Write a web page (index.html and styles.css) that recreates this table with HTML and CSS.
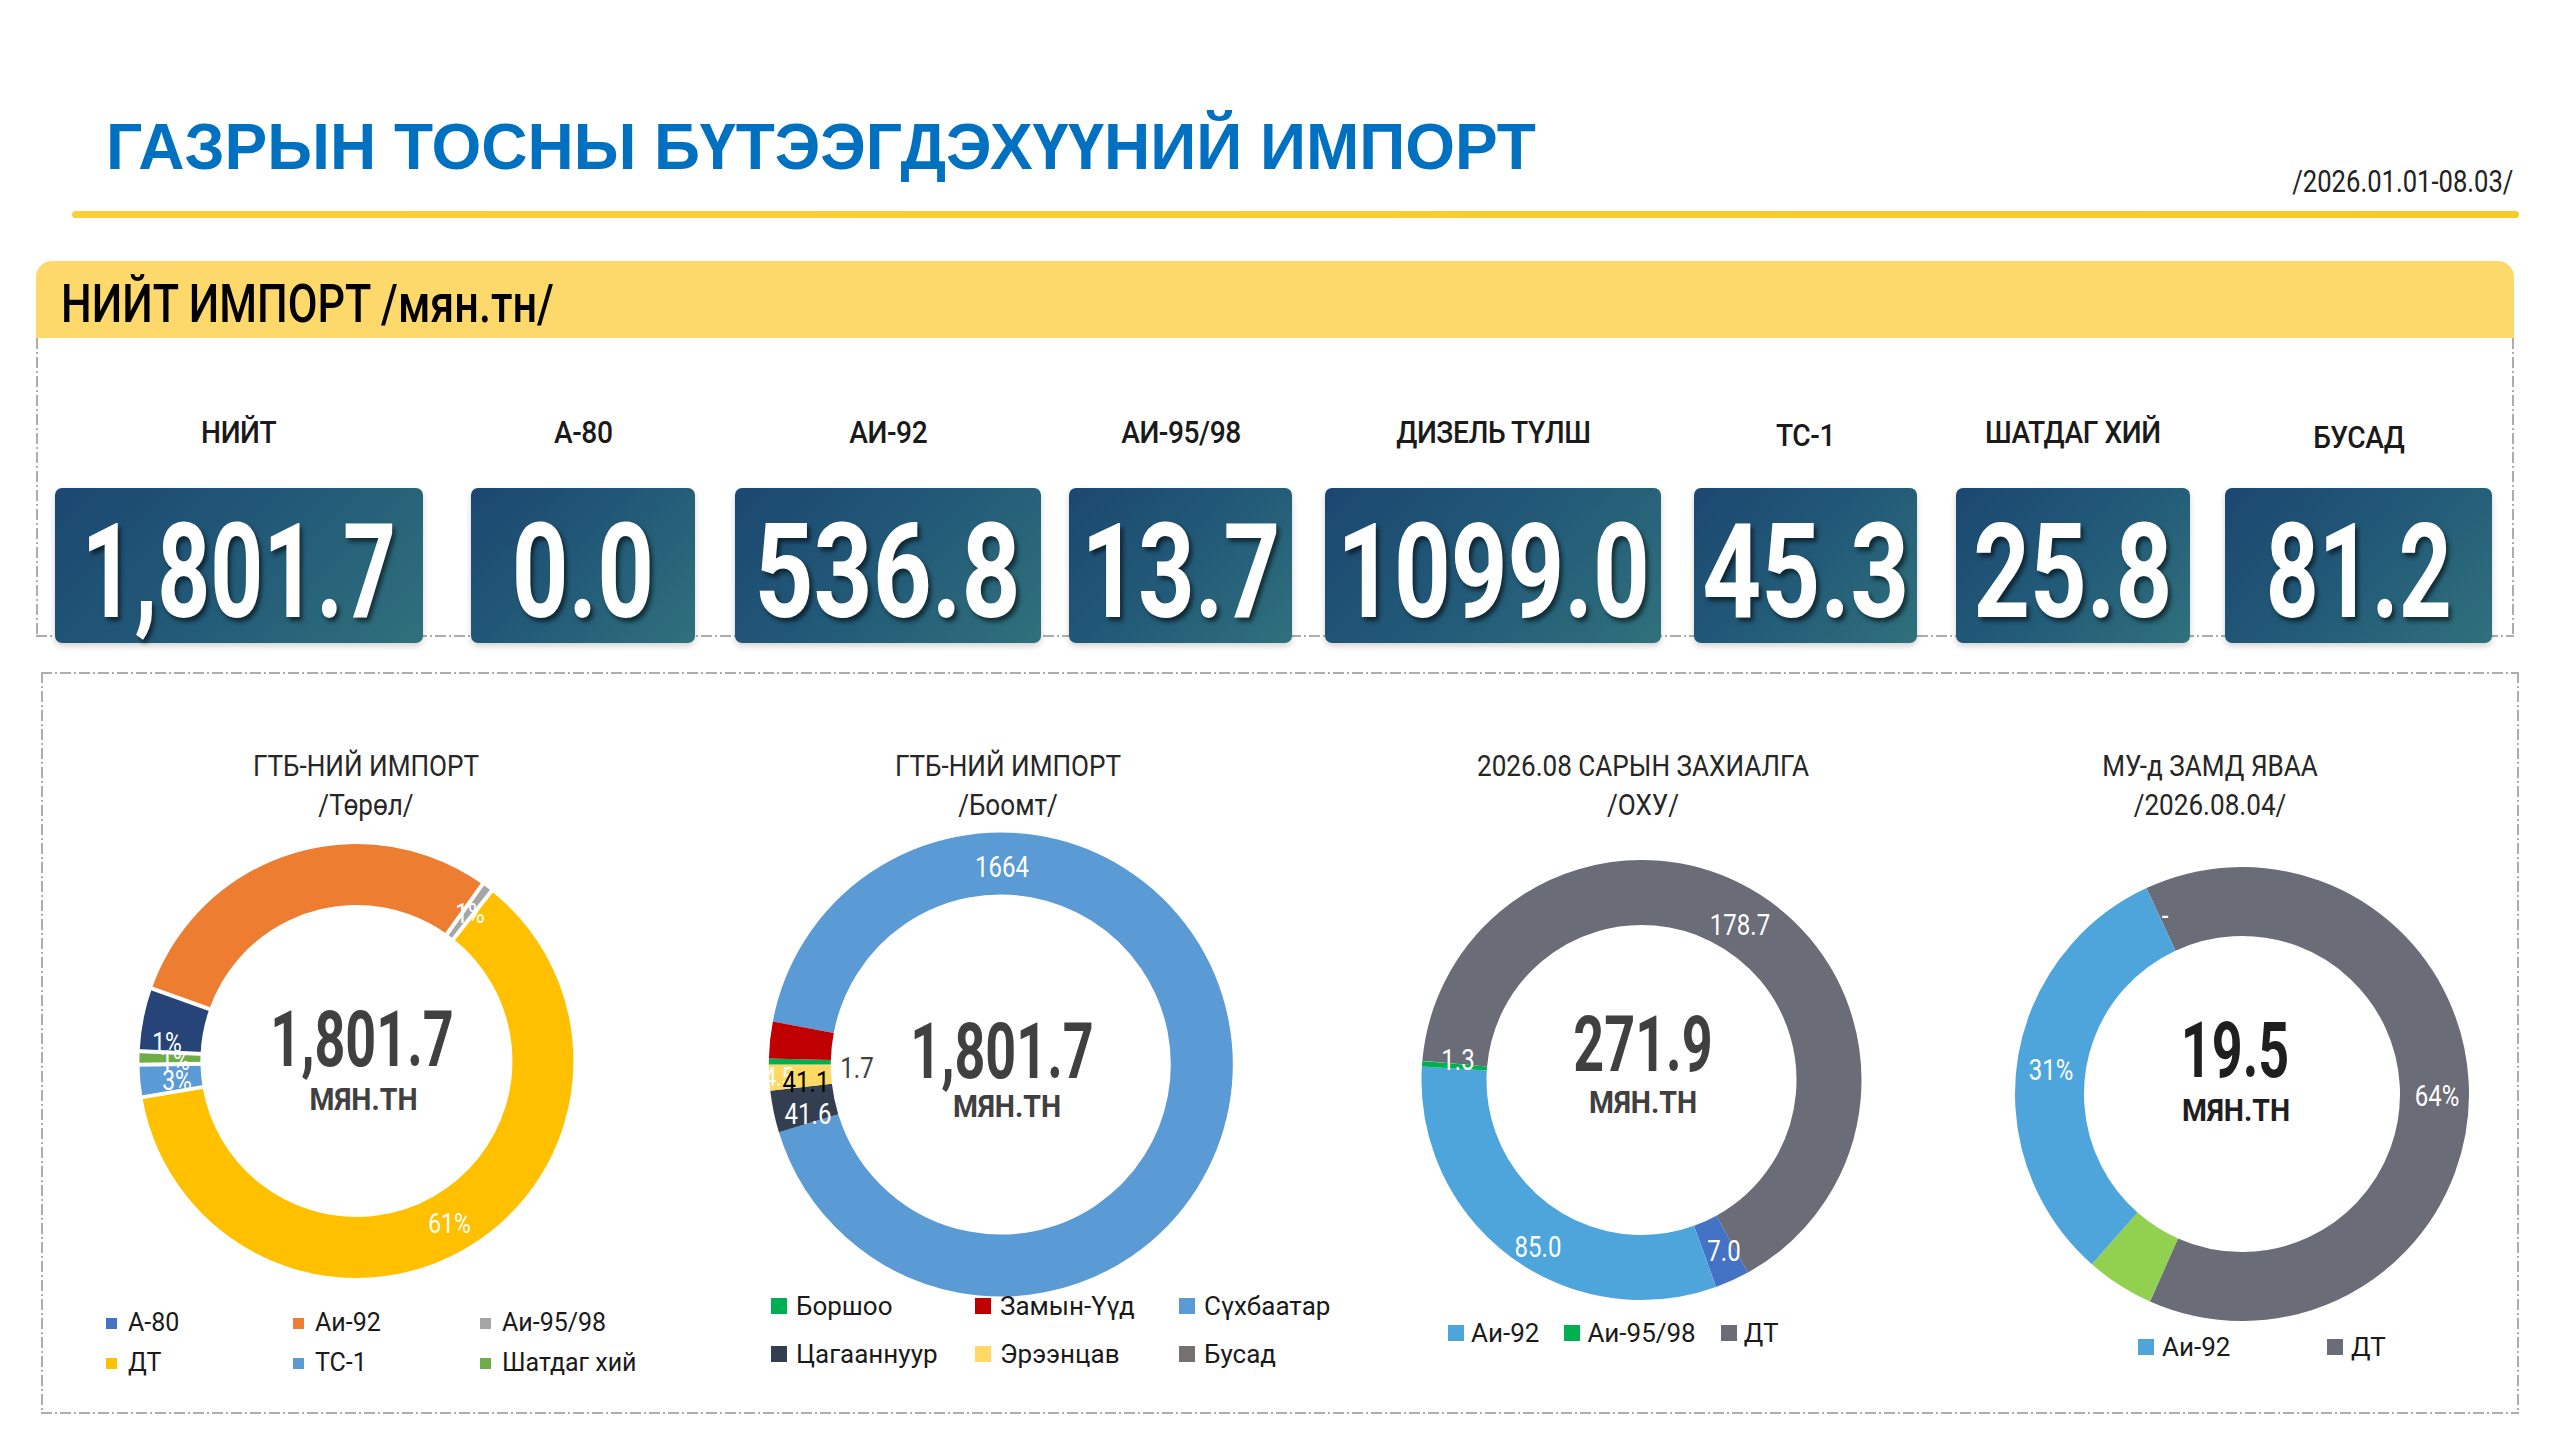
FILE: index.html
```html
<!DOCTYPE html>
<html lang="mn">
<head>
<meta charset="utf-8">
<title>Газрын тосны бүтээгдэхүүний импорт</title>
<link rel="stylesheet" href="styles.css">
</head>
<body>
<div class="page">
  <header class="top">
    <h1 class="title">ГАЗРЫН ТОСНЫ БҮТЭЭГДЭХҮҮНИЙ ИМПОРТ</h1>
    <div class="date"><span>/2026.01.01-08.03/</span></div>
  </header>
  <div class="rule"></div>

  <section class="total">
    <div class="total-head"><span>НИЙТ ИМПОРТ /мян.тн/</span></div>
    <div class="total-body">
      <div class="kpi"><div class="kpi-label"><span>НИЙТ</span></div><div class="kpi-box"><span>1,801.7</span></div></div>
      <div class="kpi"><div class="kpi-label"><span>А-80</span></div><div class="kpi-box"><span>0.0</span></div></div>
      <div class="kpi"><div class="kpi-label"><span>АИ-92</span></div><div class="kpi-box"><span>536.8</span></div></div>
      <div class="kpi"><div class="kpi-label"><span>АИ-95/98</span></div><div class="kpi-box"><span>13.7</span></div></div>
      <div class="kpi"><div class="kpi-label"><span>ДИЗЕЛЬ ТҮЛШ</span></div><div class="kpi-box"><span>1099.0</span></div></div>
      <div class="kpi"><div class="kpi-label"><span>ТС-1</span></div><div class="kpi-box"><span>45.3</span></div></div>
      <div class="kpi"><div class="kpi-label"><span>ШАТДАГ ХИЙ</span></div><div class="kpi-box"><span>25.8</span></div></div>
      <div class="kpi"><div class="kpi-label"><span>БУСАД</span></div><div class="kpi-box"><span>81.2</span></div></div>
    </div>
  </section>

  <section class="charts">
    <!-- Chart 1 -->
    <div class="chart c1">
      <div class="chart-title"><div>ГТБ-НИЙ ИМПОРТ</div><div>/Төрөл/</div></div>
      <svg width="646" height="450" viewBox="0 0 646 450">
        <g fill="none" stroke-width="61">
          <circle cx="313.4" cy="237" r="186.5" pathLength="360" stroke="#FFC000" stroke-dasharray="221.9 360" transform="rotate(-51.5 313.4 237)"/>
          <circle cx="313.4" cy="237" r="186.5" pathLength="360" stroke="#5B9BD5" stroke-dasharray="8.6 360" transform="rotate(170.4 313.4 237)"/>
          <circle cx="313.4" cy="237" r="186.5" pathLength="360" stroke="#70AD47" stroke-dasharray="3.6 360" transform="rotate(179 313.4 237)"/>
          <circle cx="313.4" cy="237" r="186.5" pathLength="360" stroke="#264478" stroke-dasharray="16.9 360" transform="rotate(182.6 313.4 237)"/>
          <circle cx="313.4" cy="237" r="186.5" pathLength="360" stroke="#ED7D31" stroke-dasharray="106 360" transform="rotate(199.5 313.4 237)"/>
          <circle cx="313.4" cy="237" r="186.5" pathLength="360" stroke="#A5A5A5" stroke-dasharray="3 360" transform="rotate(-54.5 313.4 237)"/>
        </g>
        <g stroke="#fff" stroke-width="4">
          <line x1="0" y1="-152" x2="0" y2="-221" transform="translate(313.4 237) rotate(35.5)"/>
          <line x1="0" y1="-152" x2="0" y2="-221" transform="translate(313.4 237) rotate(38.5)"/>
          <line x1="0" y1="-152" x2="0" y2="-221" transform="translate(313.4 237) rotate(260.4)"/>
          <line x1="0" y1="-152" x2="0" y2="-221" transform="translate(313.4 237) rotate(269)"/>
          <line x1="0" y1="-152" x2="0" y2="-221" transform="translate(313.4 237) rotate(272.6)"/>
          <line x1="0" y1="-152" x2="0" y2="-221" transform="translate(313.4 237) rotate(289.5)"/>
        </g>
        <text class="lbl" x="406.5" y="409">61%</text>
        <text class="lbl" x="134" y="266">3%</text>
        <text class="lbl" x="124" y="228">1%</text>
        <text class="lbl" x="132" y="246">1%</text>
        <text class="lbl" x="427" y="99">1%</text>
        <text class="num" x="319" y="242">1,801.7</text>
        <text class="unit" x="320.5" y="286">МЯН.ТН</text>
      </svg>
      <div class="legend">
        <div class="legend-item"><i class="sw" style="background:#4472C4"></i>А-80</div>
        <div class="legend-item"><i class="sw" style="background:#ED7D31"></i>Аи-92</div>
        <div class="legend-item"><i class="sw" style="background:#A5A5A5"></i>Аи-95/98</div>
        <div class="legend-item"><i class="sw" style="background:#FFC000"></i>ДТ</div>
        <div class="legend-item"><i class="sw" style="background:#5B9BD5"></i>ТС-1</div>
        <div class="legend-item"><i class="sw" style="background:#70AD47"></i>Шатдаг хий</div>
      </div>
    </div>

    <!-- Chart 2 -->
    <div class="chart c2">
      <div class="chart-title"><div>ГТБ-НИЙ ИМПОРТ</div><div>/Боомт/</div></div>
      <svg width="638" height="450" viewBox="0 0 638 450">
        <g fill="none" stroke-width="62">
          <circle cx="311.8" cy="240.5" r="201" pathLength="360" stroke="#5B9BD5" stroke-dasharray="332.3 360" transform="rotate(190.7 311.8 240.5)"/>
          <circle cx="311.8" cy="240.5" r="201" pathLength="360" stroke="#333F50" stroke-dasharray="10.5 360" transform="rotate(163 311.8 240.5)"/>
          <circle cx="311.8" cy="240.5" r="201" pathLength="360" stroke="#FFD966" stroke-dasharray="6.5 360" transform="rotate(173.5 311.8 240.5)"/>
          <circle cx="311.8" cy="240.5" r="201" pathLength="360" stroke="#00B050" stroke-dasharray="1.5 360" transform="rotate(180 311.8 240.5)"/>
          <circle cx="311.8" cy="240.5" r="201" pathLength="360" stroke="#C00000" stroke-dasharray="9.2 360" transform="rotate(181.5 311.8 240.5)"/>
        </g>
        <text class="lbl" x="313" y="53">1664</text>
        <text class="lbl small" x="84" y="262">44.5</text>
        <text class="lbl dark" x="168" y="254">1.7</text>
        <text class="lbl black" x="117" y="268">41.1</text>
        <text class="lbl" x="119" y="300">41.6</text>
        <text class="num" x="313" y="254">1,801.7</text>
        <text class="unit" x="318" y="293">МЯН.ТН</text>
      </svg>
      <div class="legend">
        <div class="legend-item"><i class="sw" style="background:#00B050"></i>Боршоо</div>
        <div class="legend-item"><i class="sw" style="background:#C00000"></i>Замын-Үүд</div>
        <div class="legend-item"><i class="sw" style="background:#5B9BD5"></i>Сүхбаатар</div>
        <div class="legend-item"><i class="sw" style="background:#333F50"></i>Цагааннуур</div>
        <div class="legend-item"><i class="sw" style="background:#FFD966"></i>Эрээнцав</div>
        <div class="legend-item"><i class="sw" style="background:#767171"></i>Бусад</div>
      </div>
    </div>

    <!-- Chart 3 -->
    <div class="chart c3">
      <div class="chart-title"><div>2026.08 САРЫН ЗАХИАЛГА</div><div>/ОХУ/</div></div>
      <svg width="632" height="450" viewBox="0 0 632 450">
        <g fill="none" stroke-width="65">
          <circle cx="314.5" cy="256" r="187.5" pathLength="360" stroke="#6A6C77" stroke-dasharray="236.1 360" transform="rotate(185 314.5 256)"/>
          <circle cx="314.5" cy="256" r="187.5" pathLength="360" stroke="#4472C4" stroke-dasharray="9.1 360" transform="rotate(61.1 314.5 256)"/>
          <circle cx="314.5" cy="256" r="187.5" pathLength="360" stroke="#4EA5DC" stroke-dasharray="113.3 360" transform="rotate(70.2 314.5 256)"/>
          <circle cx="314.5" cy="256" r="187.5" pathLength="360" stroke="#00B050" stroke-dasharray="1.5 360" transform="rotate(183.5 314.5 256)"/>
        </g>
        <text class="lbl" x="413" y="111">178.7</text>
        <text class="lbl" x="131" y="246">1.3</text>
        <text class="lbl" x="211" y="433">85.0</text>
        <text class="lbl" x="397" y="437">7.0</text>
        <text class="num" x="316" y="247">271.9</text>
        <text class="unit" x="316" y="289">МЯН.ТН</text>
      </svg>
      <div class="legend">
        <div class="legend-item"><i class="sw" style="background:#4EA5DC"></i>Аи-92</div>
        <div class="legend-item"><i class="sw" style="background:#00B050"></i>Аи-95/98</div>
        <div class="legend-item"><i class="sw" style="background:#6A6C77"></i>ДТ</div>
      </div>
    </div>

    <!-- Chart 4 -->
    <div class="chart c4">
      <div class="chart-title"><div>МУ-д ЗАМД ЯВАА</div><div>/2026.08.04/</div></div>
      <svg width="502" height="450" viewBox="0 0 502 450">
        <g fill="none" stroke-width="69">
          <circle cx="283" cy="270" r="192.5" pathLength="360" stroke="#6A6C77" stroke-dasharray="228.8 360" transform="rotate(245.1 283 270)"/>
          <circle cx="283" cy="270" r="192.5" pathLength="360" stroke="#92D050" stroke-dasharray="17.5 360" transform="rotate(113.9 283 270)"/>
          <circle cx="283" cy="270" r="192.5" pathLength="360" stroke="#4EA5DC" stroke-dasharray="113.7 360" transform="rotate(131.4 283 270)"/>
        </g>
        <text class="lbl" x="206" y="102">-</text>
        <text class="lbl" x="92" y="256">31%</text>
        <text class="lbl" x="478" y="282">64%</text>
        <text class="num deep" x="276" y="253">19.5</text>
        <text class="unit deep" x="277" y="297">МЯН.ТН</text>
      </svg>
      <div class="legend">
        <div class="legend-item"><i class="sw" style="background:#4EA5DC"></i>Аи-92</div>
        <div class="legend-item"><i class="sw" style="background:#6A6C77"></i>ДТ</div>
      </div>
    </div>
  </section>
</div>
</body>
</html>
```
FILE: styles.css
```css
* { box-sizing: border-box; margin: 0; padding: 0; }

html, body { background: #ffffff; }

body {
  width: 2560px;
  height: 1440px;
  overflow: hidden;
  font-family: Roboto, "Liberation Sans", "Noto Sans", sans-serif;
  color: #1a1a1a;
}

/* ---------- header ---------- */
.top {
  display: flex;
  justify-content: space-between;
  align-items: flex-start;
  height: 211px;
  padding: 115px 47px 0 106px;
}

.title {
  font-family: "Liberation Sans", Arial, sans-serif;
  font-weight: 700;
  font-size: 64px;
  line-height: 64px;
  letter-spacing: 0;
  color: #0070C0;
  white-space: nowrap;
}

.date {
  margin-top: 50px;
  font-size: 32px;
  line-height: 32px;
  color: #222;
  white-space: nowrap;
}
.date span {
  display: inline-block;
  transform: scaleX(.8);
  transform-origin: right center;
}

.rule {
  margin-left: 72px;
  width: 2447px;
  height: 7px;
  border-radius: 4px;
  background: linear-gradient(90deg, #F8D03A, #F5CB2B);
}

/* ---------- total section ---------- */
.total {
  margin: 43px 46px 0 36px;
}

.total-head {
  height: 77px;
  background: #FDD96B;
  border-radius: 16px 16px 0 0;
  padding: 13px 0 0 25px;
  font-size: 54px;
  line-height: 60px;
  font-weight: 500;
  color: #000;
  white-space: nowrap;
}
.total-head span {
  display: inline-block;
  transform: scaleX(.8);
  transform-origin: left center;
}

.total-body {
  display: flex;
  height: 299px;
  padding: 74px 22px 0 19px;
  background-image:
    repeating-linear-gradient(90deg, #adadad 0 11px, transparent 11px 14px, #adadad 14px 16px, transparent 16px 19px),
    repeating-linear-gradient(180deg, #adadad 0 11px, transparent 11px 14px, #adadad 14px 16px, transparent 16px 19px),
    repeating-linear-gradient(180deg, #adadad 0 11px, transparent 11px 14px, #adadad 14px 16px, transparent 16px 19px);
  background-size: 100% 2px, 2px 100%, 2px 100%;
  background-position: left bottom, left top, right top;
  background-repeat: no-repeat;
}

.kpi {
  display: flex;
  flex-direction: column;
  align-items: center;
  flex: none;
}
.kpi:nth-child(1) { width: 368px; }
.kpi:nth-child(2) { width: 224px; margin-left: 48px; }
.kpi:nth-child(3) { width: 306px; margin-left: 40px; }
.kpi:nth-child(4) { width: 223px; margin-left: 28px; }
.kpi:nth-child(5) { width: 336px; margin-left: 33px; }
.kpi:nth-child(6) { width: 223px; margin-left: 33px; }
.kpi:nth-child(7) { width: 234px; margin-left: 39px; }
.kpi:nth-child(8) { width: 267px; margin-left: 35px; }

.kpi-label {
  height: 40px;
  line-height: 40px;
  font-size: 32px;
  font-weight: 500;
  color: #1a1a1a;
  white-space: nowrap;
  display: flex;
  justify-content: center;
  width: 100%;
}
.kpi-label span {
  display: block;
  transform: scaleX(.88);
  letter-spacing: -0.5px;
}
.kpi:nth-child(6) .kpi-label { margin-top: 3px; }
.kpi:nth-child(8) .kpi-label { margin-top: 5px; }
.kpi:nth-child(6) .kpi-box { margin-top: 33px; }
.kpi:nth-child(8) .kpi-box { margin-top: 31px; }

.kpi-box {
  position: relative;
  width: 100%;
  height: 155px;
  margin-top: 36px;
  border-radius: 7px;
  background: linear-gradient(135deg, #1b4770 0%, #235c78 55%, #30717c 100%);
  box-shadow: 0 3px 6px rgba(0, 0, 0, .18);
  display: flex;
  justify-content: center;
  padding-top: 14px;
  line-height: 141px;
  font-size: 132px;
  font-weight: 700;
  color: #fff;
  white-space: nowrap;
  text-shadow: 4px 4px 5px rgba(0, 0, 0, .55);
}
.kpi-box span {
  display: block;
  transform: scaleX(.75);
}
.kpi:nth-child(1) .kpi-box span,
.kpi:nth-child(8) .kpi-box span { transform: scaleX(.7); }
.kpi:nth-child(3) .kpi-box span,
.kpi:nth-child(6) .kpi-box span { transform: scaleX(.78); }

/* ---------- charts ---------- */
.charts {
  display: grid;
  grid-template-columns: 646px 638px 632px 502px;
  height: 742px;
  margin: 35px 41px 0 41px;
  padding: 0 2px;
  background-image:
    repeating-linear-gradient(90deg, #adadad 0 11px, transparent 11px 14px, #adadad 14px 16px, transparent 16px 19px),
    repeating-linear-gradient(90deg, #adadad 0 11px, transparent 11px 14px, #adadad 14px 16px, transparent 16px 19px),
    repeating-linear-gradient(180deg, #adadad 0 11px, transparent 11px 14px, #adadad 14px 16px, transparent 16px 19px),
    repeating-linear-gradient(180deg, #adadad 0 11px, transparent 11px 14px, #adadad 14px 16px, transparent 16px 19px);
  background-size: 100% 2px, 100% 2px, 2px 100%, 2px 100%;
  background-position: left top, left bottom, left top, right top;
  background-repeat: no-repeat;
}

.chart {
  display: flex;
  flex-direction: column;
  min-width: 0;
}

.chart-title {
  padding-top: 74px;
  font-size: 30px;
  line-height: 39px;
  text-align: center;
  color: #262626;
  white-space: nowrap;
  transform: scaleX(.87);
}

.chart svg {
  display: block;
  overflow: visible;
}

.lbl {
  font-family: Roboto, "Liberation Sans", sans-serif;
  font-size: 30px;
  fill: #ffffff;
  text-anchor: middle;
  transform-box: fill-box;
  transform-origin: center;
  transform: scaleX(.8);
}
.lbl.dark { fill: #404040; }
.lbl.black { fill: #000; }
.lbl.small { font-size: 26px; }
.c1 .lbl { font-size: 27px; transform: scaleX(.85); }

.num {
  font-family: Roboto, "Liberation Sans", sans-serif;
  font-size: 77px;
  font-weight: 700;
  fill: #404040;
  text-anchor: middle;
  transform-box: fill-box;
  transform-origin: center;
  transform: scaleX(.7);
}
.unit {
  font-family: Roboto, "Liberation Sans", sans-serif;
  font-size: 31px;
  font-weight: 700;
  fill: #404040;
  text-anchor: middle;
  transform-box: fill-box;
  transform-origin: center;
  transform: scaleX(.92);
}
.num.deep, .unit.deep { fill: #1f1f1f; }

.legend {
  display: grid;
  font-size: 26px;
  line-height: 40px;
  color: #1a1a1a;
}
.legend-item {
  display: flex;
  align-items: center;
  white-space: nowrap;
}
.sw {
  display: block;
  flex: none;
  width: 16px;
  height: 16px;
  margin-right: 8px;
}

.c1 .legend {
  grid-template-columns: repeat(3, 187px);
  padding-left: 63px;
  margin-top: 29px;
  font-size: 25px;
}
.c1 .sw { width: 11px; height: 11px; margin-right: 11px; }

.c2 .legend {
  grid-template-columns: repeat(3, 204px);
  padding-left: 82px;
  margin-top: 8px;
  line-height: 48px;
}
.c2 .sw { margin-right: 9px; }

.c3 .legend {
  display: flex;
  gap: 25px;
  padding-left: 121px;
  margin-top: 39px;
}
.c3 .sw { margin-right: 7px; }

.c4 .legend {
  grid-template-columns: 189px auto;
  padding-left: 179px;
  margin-top: 53px;
}
```
